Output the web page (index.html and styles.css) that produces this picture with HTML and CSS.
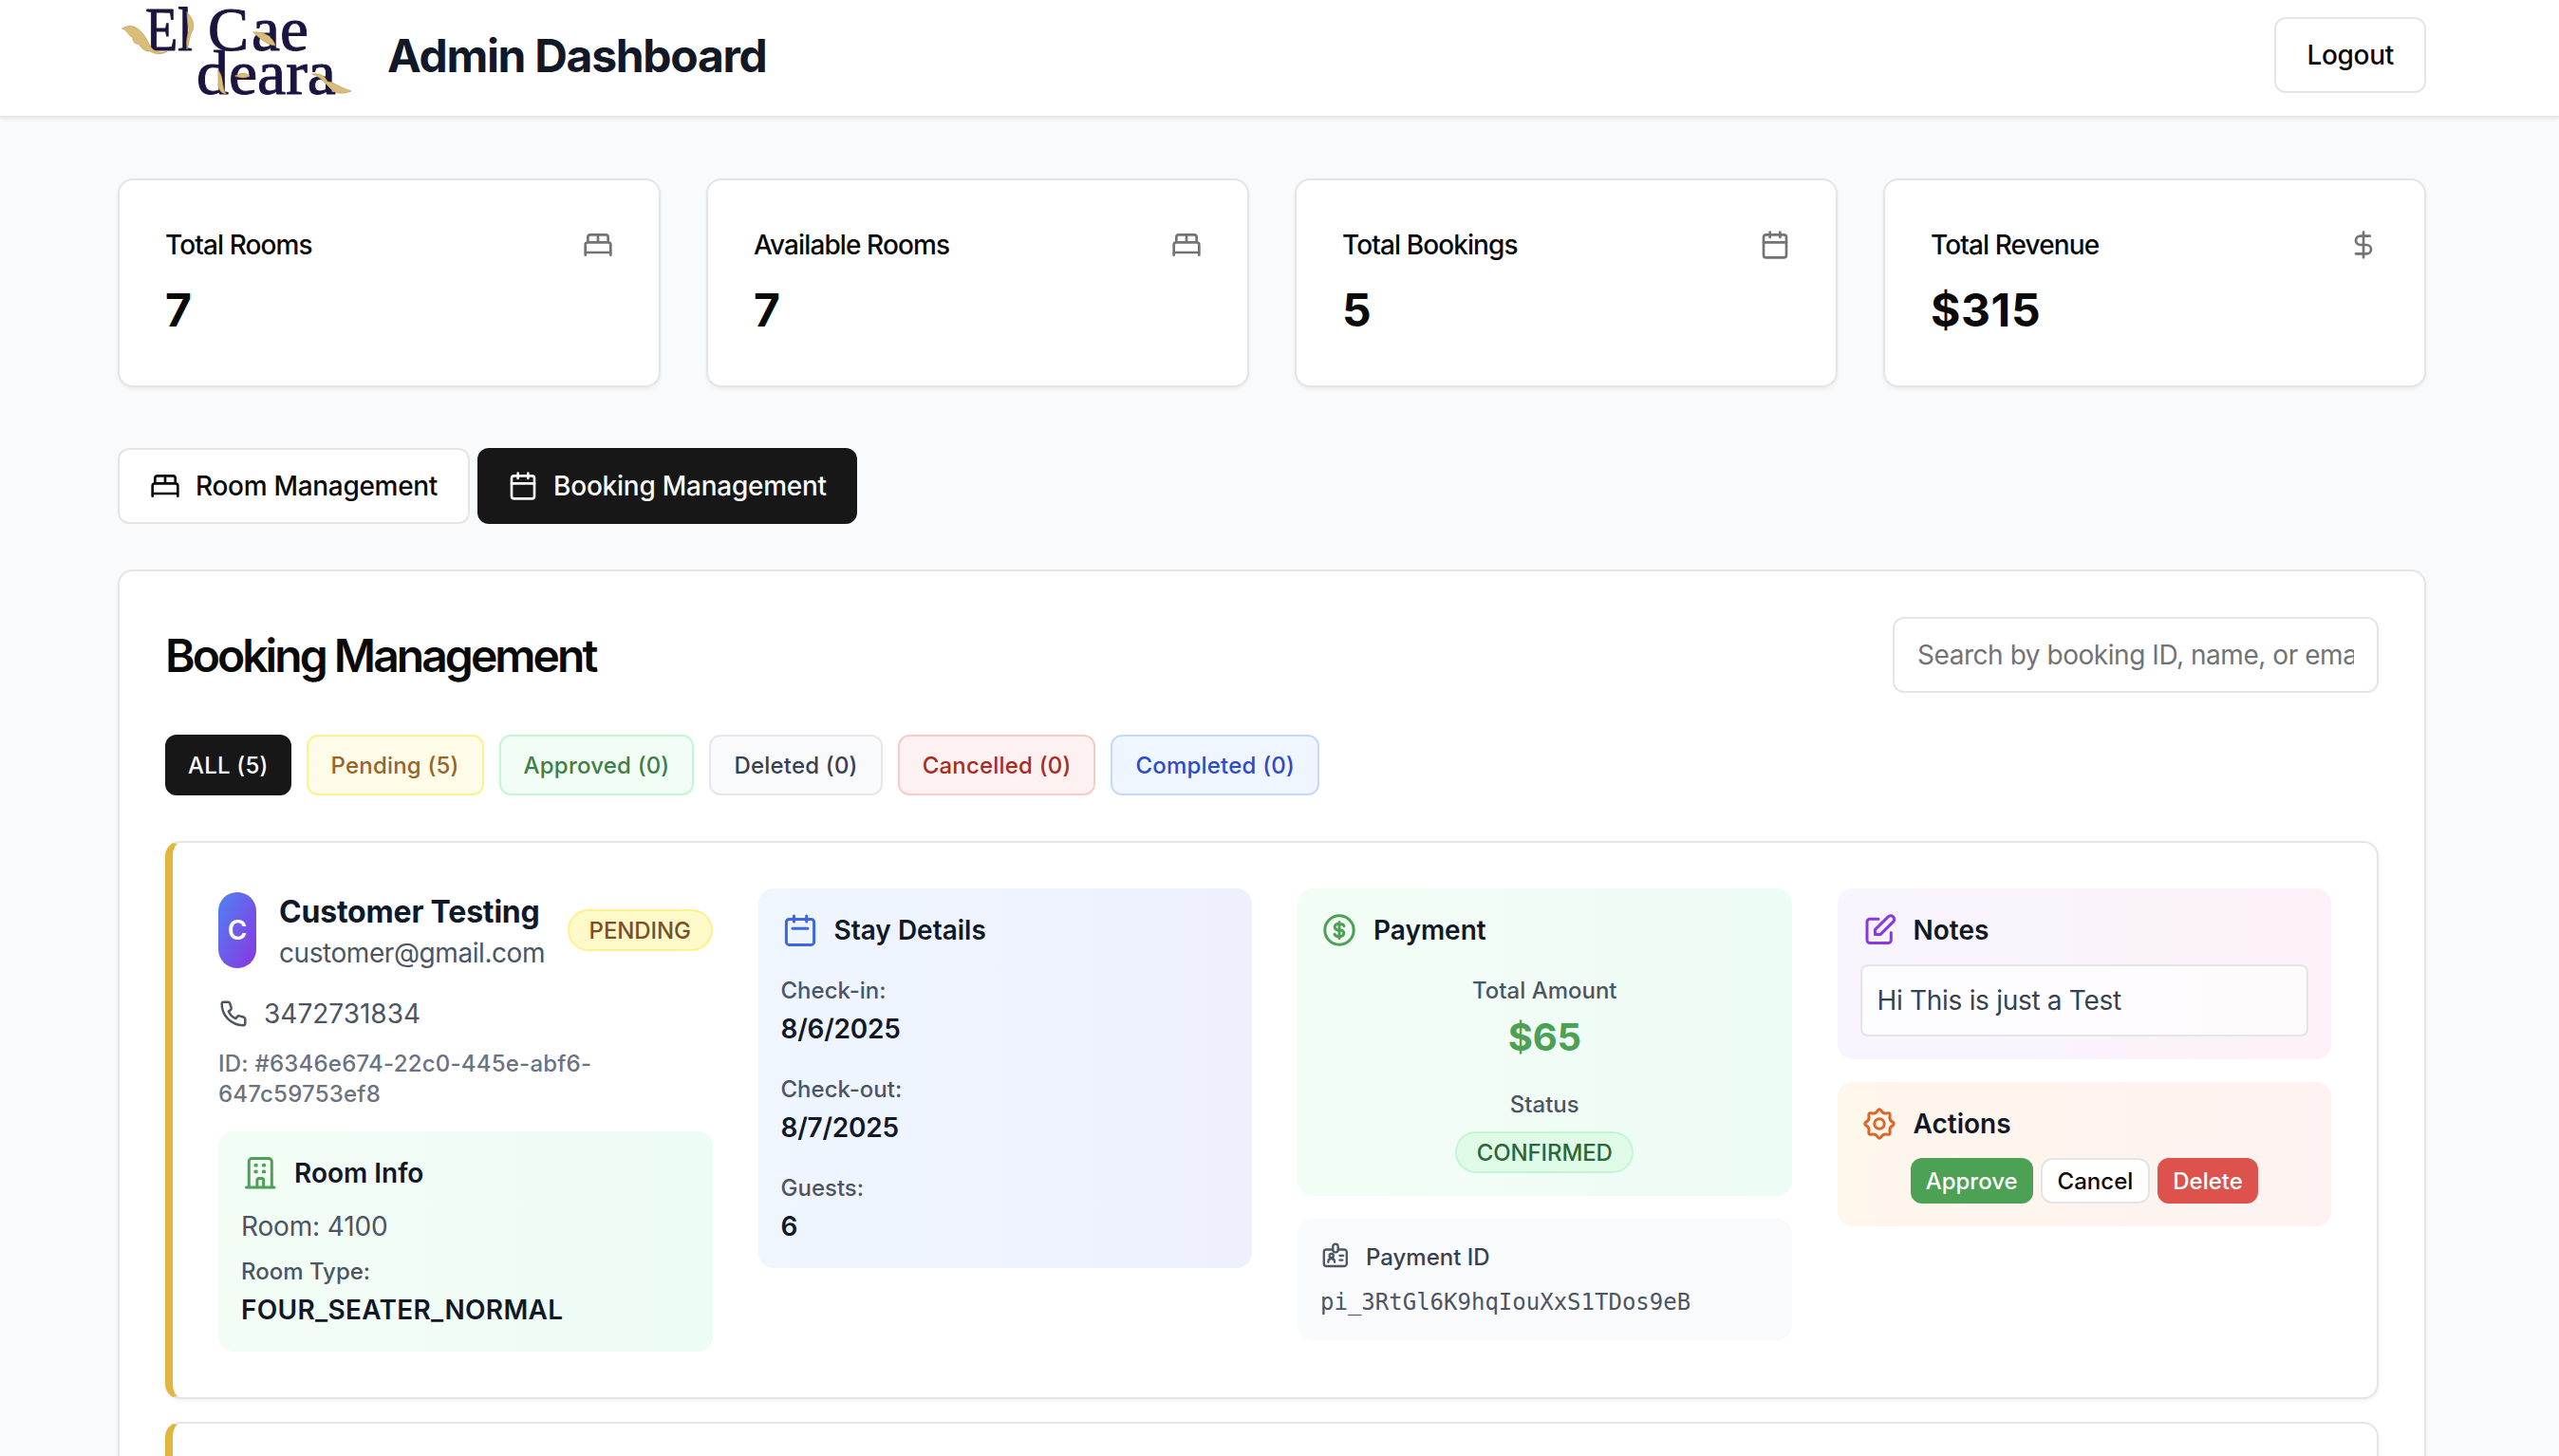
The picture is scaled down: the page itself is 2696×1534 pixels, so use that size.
FILE: index.html
```html
<!DOCTYPE html>
<html lang="en">
<head>
<meta charset="utf-8">
<title>Admin Dashboard</title>
<link rel="stylesheet" href="styles.css">
</head>
<body>
<svg class="sprite" aria-hidden="true">
  <symbol id="bed" viewBox="0 0 24 24"><path d="M2 20v-8a2 2 0 0 1 2-2h16a2 2 0 0 1 2 2v8M4 10V6a2 2 0 0 1 2-2h12a2 2 0 0 1 2 2v4M12 4v6M2 18h20"/></symbol>
  <symbol id="calendar" viewBox="0 0 24 24"><path d="M8 2v4M16 2v4M3 10h18"/><rect x="3" y="4" width="18" height="18" rx="2"/></symbol>
  <symbol id="dollar" viewBox="0 0 24 24"><path d="M12 2v20M17 5H9.5a3.5 3.5 0 0 0 0 7h5a3.5 3.5 0 0 1 0 7H6"/></symbol>
</svg>

<header class="header">
  <div class="container header-row">
    <div class="brand">
      <svg class="logo" viewBox="0 0 260 108" role="img" aria-label="El Cae deara">
        <g class="logo-text">
          <text x="29" y="53" textLength="50" lengthAdjust="spacingAndGlyphs">El</text>
          <text x="95" y="53" textLength="43" lengthAdjust="spacingAndGlyphs">C</text>
          <text x="141" y="53" textLength="60" lengthAdjust="spacingAndGlyphs">ae</text>
          <text x="83" y="99" textLength="147" lengthAdjust="spacingAndGlyphs">deara</text>
        </g>
        <g class="logo-leaf">
          <path d="M5 30C12 25 20 28 25 34C31 40 32 46 36 51C40 55 46 56 52 54C46 58 39 57 34 54C28 54 24 50 22 46C18 47 15 42 16 39C12 39 11 33 5 30Z"/>
          <path d="M73 13C80 20 82 28 77 36C75 41 75 47 73 52C72 44 73 38 75 32C74 25 73 20 73 13Z"/>
          <path d="M143 34C151 33 163 37 166 48C157 47 150 41 143 34Z"/>
          <path d="M106 74C112 82 109 90 114 99C107 98 105 91 106 86Z"/>
          <path d="M124 80C130 76 136 77 139 80C134 83 128 82 124 80Z"/>
          <path d="M205 78C214 77 218 80 221 86C227 86 231 91 246 96C238 99 231 99 226 95C220 90 216 82 205 78Z"/>
        </g>
      </svg>
      <h1 class="title">Admin Dashboard</h1>
    </div>
    <button class="btn logout">Logout</button>
  </div>
</header>

<main class="container main">
  <section class="stats">
    <article class="card stat"><div class="stat-head"><h3>Total Rooms</h3><svg class="icon muted"><use href="#bed"/></svg></div><div class="stat-value">7</div></article>
    <article class="card stat"><div class="stat-head"><h3>Available Rooms</h3><svg class="icon muted"><use href="#bed"/></svg></div><div class="stat-value">7</div></article>
    <article class="card stat"><div class="stat-head"><h3>Total Bookings</h3><svg class="icon muted"><use href="#calendar"/></svg></div><div class="stat-value">5</div></article>
    <article class="card stat"><div class="stat-head"><h3>Total Revenue</h3><svg class="icon muted"><use href="#dollar"/></svg></div><div class="stat-value">$315</div></article>
  </section>

  <nav class="tabs">
    <button class="btn tab"><svg class="icon"><use href="#bed"/></svg><span>Room Management</span></button>
    <button class="btn tab tab-active"><svg class="icon"><use href="#calendar"/></svg><span>Booking Management</span></button>
  </nav>

  <section class="card bookings">
    <div class="bookings-head">
      <h2>Booking Management</h2>
      <div class="search"><span>Search by booking ID, name, or email</span></div>
    </div>
    <div class="filters">
      <button class="filter all">ALL (5)</button>
      <button class="filter pending">Pending (5)</button>
      <button class="filter approved">Approved (0)</button>
      <button class="filter deleted">Deleted (0)</button>
      <button class="filter cancelled">Cancelled (0)</button>
      <button class="filter completed">Completed (0)</button>
    </div>

    <div class="booking-list">
      <article class="card booking">
        <div class="col">
          <div class="customer">
            <div class="avatar">C</div>
            <div class="who"><h3 class="name">Customer Testing</h3><p class="email">customer@gmail.com</p></div>
            <span class="badge badge-pending">PENDING</span>
          </div>
          <div class="phone">
            <svg class="icon phone-icon" viewBox="0 0 32 32"><path d="M5.6 3.7H10.3C11.2 3.7 11.9 4.2 12.2 5L13.6 9.6C13.9 10.5 13.6 11.4 12.9 12L10.9 13.6C12.2 16.9 15 19.7 18.4 21.1L20 19.1C20.6 18.4 21.5 18.1 22.4 18.4L27 19.8C27.8 20.1 28.3 20.8 28.3 21.7V26C28.3 27.2 27.4 28.2 26.2 28.2C13.8 28.2 3.7 18.2 3.7 5.8C3.7 4.6 4.5 3.7 5.6 3.7Z"/></svg>
            <span>3472731834</span>
          </div>
          <p class="booking-id">ID: #6346e674-22c0-445e-abf6-<br>647c59753ef8</p>
          <div class="panel green room">
            <div class="panel-head">
              <svg class="icon-lg" viewBox="0 0 40 40"><path d="M5.5 35H35M8.3 35V7.6A3 3 0 0 1 11.3 4.6H29.3A3 3 0 0 1 32.3 7.6V35M16.9 35V27.4A2 2 0 0 1 18.9 25.4H21.7A2 2 0 0 1 23.7 27.4V35"/><path class="dots" d="M15.3 11.7h.6M23.7 11.7h.6M15.3 18.4h.6M23.7 18.4h.6"/></svg>
              <h4>Room Info</h4>
            </div>
            <p class="room-no">Room: 4100</p>
            <p class="label">Room Type:</p>
            <p class="value room-type">FOUR_SEATER_NORMAL</p>
          </div>
        </div>

        <div class="col">
          <div class="panel blue">
            <div class="panel-head">
              <svg class="icon-lg" viewBox="0 0 40 40"><rect x="5.4" y="8.4" width="29.2" height="27" rx="3"/><path d="M13.5 5v6M26.7 5v6M12 18.3H28"/></svg>
              <h4>Stay Details</h4>
            </div>
            <dl class="stay">
              <div><dt class="label">Check-in:</dt><dd class="value">8/6/2025</dd></div>
              <div><dt class="label">Check-out:</dt><dd class="value">8/7/2025</dd></div>
              <div><dt class="label">Guests:</dt><dd class="value">6</dd></div>
            </dl>
          </div>
        </div>

        <div class="col">
          <div class="panel green">
            <div class="panel-head">
              <svg class="icon-lg" viewBox="0 0 40 40"><circle cx="20" cy="20" r="15.2"/><path d="M25 15.6C24.4 14.2 23 13.6 21.4 13.6H18.4A3.2 3.2 0 0 0 18.4 20H21.6A3.2 3.2 0 0 1 21.6 26.4H18.6C17 26.4 15.6 25.8 15 24.4M20 11.5V28.5"/></svg>
              <h4>Payment</h4>
            </div>
            <div class="amount">
              <p class="label">Total Amount</p>
              <p class="total">$65</p>
              <p class="label status">Status</p>
              <span class="badge badge-confirmed">CONFIRMED</span>
            </div>
          </div>
          <div class="panel gray">
            <div class="pay-head">
              <svg class="icon pay-icon" viewBox="0 0 32 32"><path d="M12.8 8.5H6.2A2.4 2.4 0 0 0 3.8 10.9V23.6A2.4 2.4 0 0 0 6.2 26H25.4A2.4 2.4 0 0 0 27.8 23.6V10.9A2.4 2.4 0 0 0 25.4 8.5H19.2"/><rect x="13.3" y="2.6" width="5.4" height="8.8" rx="2.7"/><circle cx="11.7" cy="15" r="2.1"/><path d="M8.3 21.8C8.3 19.4 9.6 18 11.7 18S15.1 19.4 15.1 21.8M20.4 14.8H24.2M20.4 19.6H23.4"/></svg>
              <span>Payment ID</span>
            </div>
            <p class="mono">pi_3RtGl6K9hqIouXxS1TDos9eB</p>
          </div>
        </div>

        <div class="col">
          <div class="panel purple">
            <div class="panel-head">
              <svg class="icon-lg" viewBox="0 0 40 40"><path d="M19 8.3H10A3 3 0 0 0 7 11.3V30.5A3 3 0 0 0 10 33.5H29.3A3 3 0 0 0 32.3 30.5V22.4M15.5 19.3L29.3 5.9A3.7 3.7 0 0 1 34.6 11.1L21 24.6H15.5Z"/></svg>
              <h4>Notes</h4>
            </div>
            <div class="note">Hi This is just a Test</div>
          </div>
          <div class="panel orange">
            <div class="panel-head">
              <svg class="icon-lg" viewBox="0 0 40 40"><path d="M17.9 6.42Q20 3 22.11 6.42Q24.21 9.84 28.12 8.91Q32.02 7.98 31.09 11.89Q30.16 15.79 33.58 17.9Q37 20 33.58 22.11Q30.16 24.21 31.09 28.12Q32.02 32.02 28.12 31.09Q24.21 30.16 22.11 33.58Q20 37 17.9 33.58Q15.79 30.16 11.89 31.09Q7.98 32.02 8.91 28.12Q9.84 24.21 6.42 22.11Q3 20 6.42 17.9Q9.84 15.79 8.91 11.89Q7.98 7.98 11.89 8.91Q15.79 9.84 17.9 6.42Z"/><circle cx="20" cy="20" r="5.2"/></svg>
              <h4>Actions</h4>
            </div>
            <div class="actions">
              <button class="action approve">Approve</button>
              <button class="action cancel">Cancel</button>
              <button class="action delete">Delete</button>
            </div>
          </div>
        </div>
      </article>
      <article class="card booking"></article>
    </div>
  </section>
</main>
</body>
</html>
```
FILE: styles.css
```css
* { box-sizing: border-box; margin: 0; padding: 0; }

body {
  background: #f9fafc;
  color: #0a0a0a;
  font: 28px/40px Inter, "Liberation Sans", sans-serif;
  height: 1534px;
  overflow: hidden;
}

button { font: inherit; color: inherit; background: none; border: 0; white-space: nowrap; }
h1, h2, h3, h4 { font-size: inherit; font-weight: inherit; white-space: nowrap; }
svg { display: block; flex: none; fill: none; stroke: currentColor; stroke-linecap: round; stroke-linejoin: round; }

.sprite { width: 0; height: 0; position: absolute; }
.icon { width: 32px; height: 32px; stroke-width: 2; }
.icon-lg { width: 40px; height: 40px; stroke-width: 3; }
.muted { color: #737373; }

.container { width: 2432px; margin-left: 124px; }

.header { height: 124px; background: #fff; border-bottom: 2px solid #e5e7eb; box-shadow: 0 2px 4px rgba(0, 0, 0, .06); }
.header-row { display: flex; justify-content: space-between; padding-top: 18px; }
.brand { display: flex; align-items: center; gap: 24px; height: 80px; }
.logo { width: 260px; height: 108px; margin-top: -8px; overflow: visible; }
.logo-text { font: 66px "Liberation Serif", serif; fill: #1c1440; stroke: #1c1440; stroke-width: 1; }
.logo-leaf { fill: #d8be78; stroke: #bd9c50; stroke-width: .7; }
.title { padding-top: 2px; font-size: 48px; line-height: 64px; font-weight: 700; letter-spacing: -1.3px; color: #111827; }

.btn { display: flex; align-items: center; gap: 16px; height: 80px; padding: 0 32px; background: #fff; border: 2px solid #e5e5e5; border-radius: 12px; font-weight: 500; letter-spacing: -.3px; }
.logout { color: #0a0a0a; }

.main { padding-top: 64px; }
.card { background: #fff; border: 2px solid #e5e5e5; border-radius: 16px; box-shadow: 0 2px 4px rgba(0, 0, 0, .06); }

.stats { display: grid; grid-template-columns: repeat(4, 1fr); gap: 48px; }
.stat { height: 220px; padding: 48px; display: flex; flex-direction: column; gap: 17px; }
.stat-head { display: flex; align-items: center; justify-content: space-between; font-weight: 500; letter-spacing: -.9px; }
.stat-value { font-size: 48px; line-height: 64px; font-weight: 700; letter-spacing: .6px; }

.tabs { display: flex; gap: 8px; margin-top: 64px; }
.tab-active { padding: 0 32px; background: #171717; border: 0; color: #fafafa; letter-spacing: -.25px; }

.bookings { margin-top: 48px; height: 1100px; padding: 48px; }
.bookings-head { display: flex; align-items: center; justify-content: space-between; }
.bookings-head h2 { padding-top: 2px; font-size: 48px; line-height: 64px; font-weight: 600; letter-spacing: -2.95px; }
.search { width: 512px; height: 80px; padding: 18px 24px; border: 2px solid #e5e5e5; border-radius: 12px; color: #737373; letter-spacing: -.45px; }
.search span { display: block; overflow: hidden; white-space: nowrap; }

.filters { display: flex; gap: 16px; margin-top: 44px; }
.filter { height: 64px; padding: 2px 24px 0; border: 2px solid; border-radius: 12px; font-size: 24px; font-weight: 500; letter-spacing: .2px; }
.all { padding: 2px 22px 0; background: #171717; border-color: #171717; color: #fafafa; }
.pending { background: #fefce8; border-color: #fdf08f; color: #9a6424; }
.approved { background: #f2fdf5; border-color: #c3f6d2; color: #3c8046; }
.deleted { background: #f9fafc; border-color: #e5e7eb; color: #374151; }
.cancelled { background: #fdf2f1; border-color: #f7cbca; color: #ab2b24; }
.completed { background: #eff6ff; border-color: #c3dafc; color: #2c4bcb; }

.booking-list { margin-top: 48px; display: flex; flex-direction: column; gap: 24px; }
.booking { height: 588px; flex: none; padding: 48px; border-left: 8px solid #e2b53e; display: grid; grid-template-columns: repeat(4, 1fr); gap: 48px; }
.col { min-width: 0; display: flex; flex-direction: column; gap: 24px; }

.customer { display: flex; align-items: center; gap: 24px; height: 88px; }
.avatar { width: 40px; height: 80px; flex: none; border-radius: 20px; background: linear-gradient(to bottom right, #4f82f3, #8a35e0); color: #fff; font-weight: 600; display: grid; place-items: center; }
.who { width: 280px; flex: none; }
.name { height: 48px; font-size: 32px; line-height: 50px; font-weight: 700; letter-spacing: -.2px; color: #111827; }
.email { color: #4b5563; letter-spacing: -.43px; }
.badge { display: inline-flex; align-items: center; justify-content: center; height: 44px; padding-top: 1px; border: 2px solid; border-radius: 22px; font-size: 24px; line-height: 32px; font-weight: 500; letter-spacing: -.1px; }
.badge-pending { width: 152.5px; flex: none; background: #fef9c8; border-color: #fdf08f; color: #7d4f20; }
.badge-confirmed { width: 188px; background: #dffbe7; border-color: #c3f6d2; color: #2f6637; }

.phone { display: flex; align-items: center; gap: 16px; color: #4b5563; }
.phone-icon { stroke-width: 2.5; }
.booking-id { height: 64px; padding-top: 1px; margin-top: -8px; font-size: 24px; line-height: 32px; font-weight: 500; letter-spacing: .22px; color: #6b7280; }

.panel { border-radius: 16px; padding: 24px; }
.panel-head { display: flex; align-items: center; gap: 16px; }
.panel-head h4 { font-weight: 600; color: #111827; }
.green { background: linear-gradient(to right, #f2fdf5, #eefcf6); }
.green .icon-lg { color: #4ca154; }
.blue { background: linear-gradient(to right, #eff6ff, #eef0fe); }
.blue .icon-lg { color: #3b66e5; }
.purple { background: linear-gradient(to right, #f8f5ff, #fcf1f7); }
.purple .icon-lg { color: #8a38e2; }
.orange { background: linear-gradient(to right, #fef7ec, #fcf2f1); }
.orange .icon-lg { color: #dc6527; }
.gray { background: #f9fafc; }

.label { font-size: 24px; line-height: 32px; font-weight: 500; color: #4b5563; }
.value { margin-top: 4px; font-weight: 600; letter-spacing: -.25px; color: #111827; }
.room-type { letter-spacing: .3px; }
.room-no { margin: 16px 0 12px; color: #4b5563; letter-spacing: -.15px; }
.dots { stroke-width: 3.8; }

.stay { margin-top: 28px; display: flex; flex-direction: column; gap: 28px; }
.amount { margin-top: 28px; display: flex; flex-direction: column; align-items: center; }
.total { height: 56px; margin-top: 4px; font-size: 40px; line-height: 58px; font-weight: 700; letter-spacing: -.2px; color: #4ca154; }
.status { margin: 28px 0 12px; }

.pay-head { display: flex; align-items: center; gap: 16px; height: 32px; font-size: 24px; font-weight: 500; color: #374151; }
.pay-head span { padding-top: 2px; }
.pay-icon { color: #4b5563; stroke-width: 2.3; }
.mono { margin-top: 16px; font: 24px/32px "DejaVu Sans Mono", monospace; color: #4b5563; }

.note { margin-top: 16px; height: 76px; padding: 16px; border: 2px solid #e5e5e5; border-radius: 8px; background: rgba(255, 255, 255, .7); color: #374151; letter-spacing: -.3px; }
.actions { margin-top: 16px; display: flex; justify-content: center; gap: 8px; }
.action { height: 48px; border-radius: 12px; padding: 1px 16px 0; font-size: 24px; font-weight: 500; color: #fff; }
.approve { background: #4ca154; }
.cancel { padding: 1px 16px 0; background: #fff; border: 2px solid #e5e5e5; color: #0a0a0a; }
.delete { background: #dd524c; }
```
